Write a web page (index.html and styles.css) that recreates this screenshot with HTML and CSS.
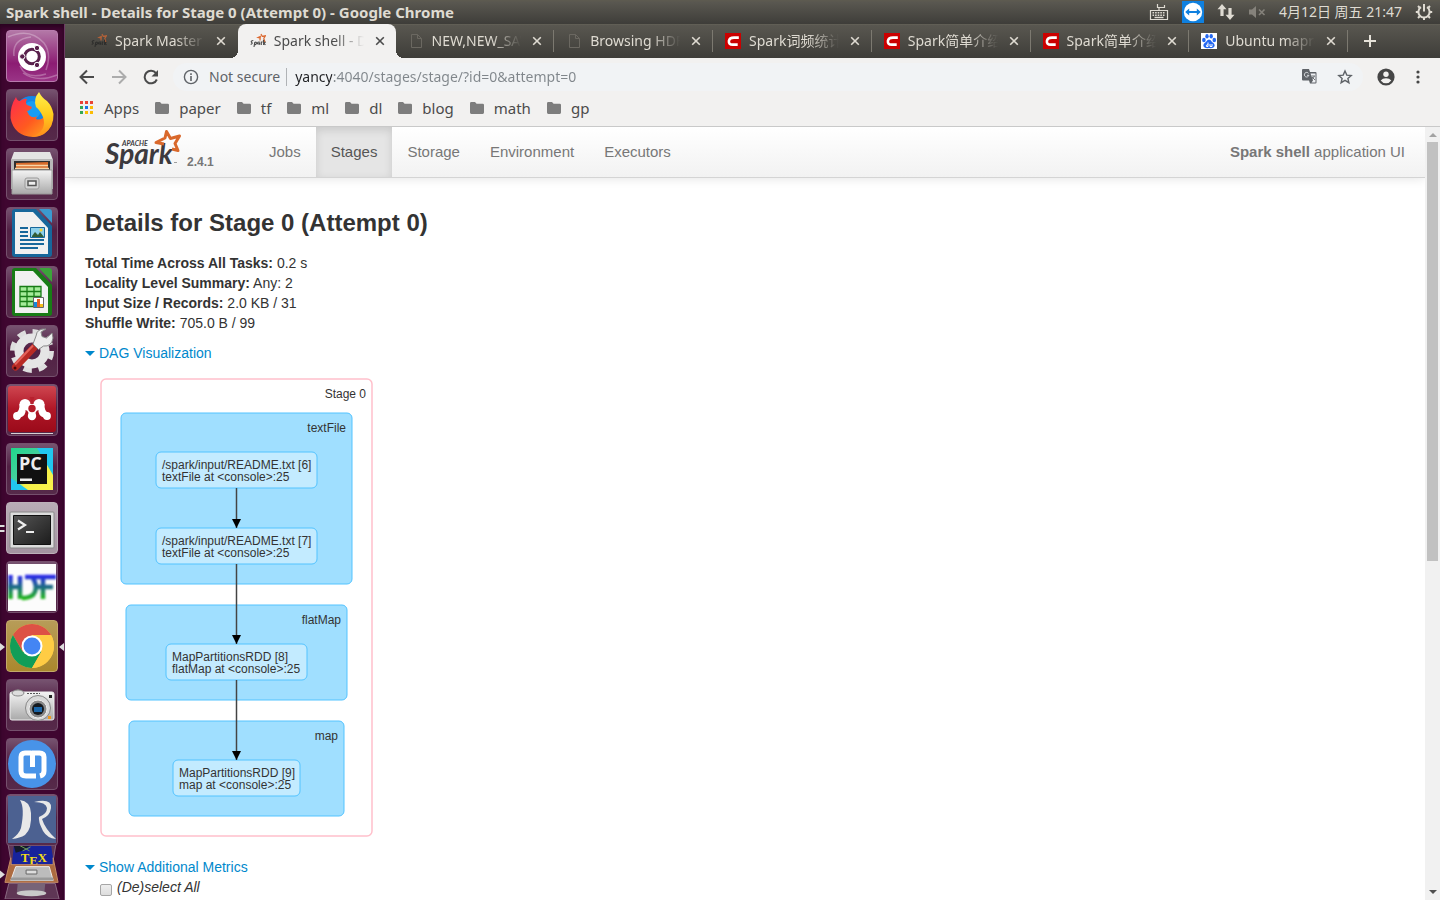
FILE: index.html
```html
<!DOCTYPE html>
<html lang="en">
<head>
<meta charset="utf-8">
<title>Spark shell - Details for Stage 0 (Attempt 0)</title>
<link rel="stylesheet" href="styles.css">
</head>
<body>
<svg class="defs" aria-hidden="true">
  <defs>
    <linearGradient id="silver" x1="0" y1="0" x2="0" y2="1"><stop offset="0" stop-color="#f4f4f4"/><stop offset="1" stop-color="#a9a9a9"/></linearGradient>
    <linearGradient id="redg" x1="0" y1="0" x2="0" y2="1"><stop offset="0" stop-color="#cf4650"/><stop offset=".5" stop-color="#b01727"/><stop offset="1" stop-color="#9b0a1a"/></linearGradient>
    <linearGradient id="hdf" gradientUnits="userSpaceOnUse" x1="0" y1="14" x2="0" y2="39"><stop offset="0" stop-color="#2a22f0"/><stop offset=".5" stop-color="#1c6f80"/><stop offset="1" stop-color="#22c010"/></linearGradient>
    <linearGradient id="foxr" x1="0" y1="0" x2="1" y2="1"><stop offset="0" stop-color="#ff2a4e"/><stop offset=".55" stop-color="#ff5a20"/><stop offset="1" stop-color="#ffb01c"/></linearGradient>
    <linearGradient id="foxy" x1="0" y1="0" x2="0" y2="1"><stop offset="0" stop-color="#fff04c"/><stop offset=".5" stop-color="#ffcd1c"/><stop offset="1" stop-color="#ff8a1c"/></linearGradient>
    <linearGradient id="term" x1="0" y1="0" x2="1" y2="1"><stop offset="0" stop-color="#555"/><stop offset="1" stop-color="#1c1c1c"/></linearGradient>
    <linearGradient id="pyc" x1="0" y1="0" x2="1" y2="1"><stop offset="0" stop-color="#1fd68a"/><stop offset=".45" stop-color="#48d0a0"/><stop offset=".6" stop-color="#f4f04a"/><stop offset="1" stop-color="#f8f24c"/></linearGradient>
    <symbol id="folder" viewBox="0 0 14 12"><path fill="#7d7d7d" d="M1.3 0H5l1.6 1.7h6.1q1.3 0 1.3 1.3v7.6q0 1.4-1.3 1.4H1.3Q0 12 0 10.600V1.400Q0 0 1.300 0z"/></symbol>
    <symbol id="page" viewBox="0 0 16 16"><path fill="none" stroke="#6b6861" d="M3.500 1.500h6l4 4v9h-10zM9.500 1.500v4h4"/></symbol>
    <symbol id="csdn" viewBox="0 0 16 16"><path fill="#cb0000" d="M0 0h16v16H0z"/><path fill="none" stroke="#fff" stroke-width="2.600" d="M13.800 4.600H9Q4.500 4.600 3.900 8q-.4 3.600 3.800 3.600h5"/></symbol>
    <symbol id="spk" viewBox="0 0 16 16"><path fill="none" stroke="#dc6a32" stroke-width="1.200" d="M11 1l1.200 2.300 3.300-.6-1.700 2.600 1 3.300-2-.8M10 7.500V5L8 4.500l2.300-1z"/><path fill="none" stroke="currentColor" stroke-width="1.100" d="M3.300 7.500q-2.800.2-1.800 1.700 1.800 1.200-.8 2.300M4 14l.7-4.500q2-1 1.700.8-.6 1.900-1.800 1M9.700 9q-2.200-.4-2.200 1.600 1 1.200 2.200-.8l-.1 2M11.300 12V9h1.300M13.600 12V6.700M15.700 8.800l-1.700 1.400 1.400 1.800"/></symbol>
    <symbol id="x" viewBox="0 0 10 10"><path fill="none" stroke="currentColor" stroke-width="1.600" d="M1.200 1.200l7.600 7.600M8.800 1.200L1.200 8.800"/></symbol>
  </defs>
</svg>

<header class="panel">
  <h1 class="panel-title">Spark shell - Details for Stage 0 (Attempt 0) - Google Chrome</h1>
  <div class="indicators">
    <svg width="20" height="20" viewBox="0 0 20 20"><path fill="none" stroke="#dfdbd2" stroke-width="1.200" d="M1.500 8.500h17v9h-17zM10 8V5.500h5.500V3M10 5.500H8.500V2"/><path stroke="#dfdbd2" stroke-width="1.600" stroke-dasharray="1.600 1" d="M3.500 10.800h13M3.500 13.200h13"/><path stroke="#dfdbd2" stroke-width="1.400" d="M5.500 15.500h9"/></svg>
    <svg width="22" height="22" viewBox="0 0 22 22"><path fill="#0f80df" d="M0 0h22v22H0z"/><circle cx="11" cy="11" r="9.200" fill="#fff"/><path fill="#0f80df" d="M3.200 11l4-3.400v2.400h7.600V7.600l4 3.400-4 3.400V12H7.200v2.400z"/></svg>
    <svg width="18" height="18" viewBox="0 0 18 18"><path fill="#dfdbd2" d="M5 1l4.500 5.200H6.600V13H3.400V6.200H.5zM13 17l-4.500-5.200h2.900V5h3.200v6.800h2.900z"/></svg>
    <svg width="18" height="16" viewBox="0 0 18 16"><path fill="#85827b" d="M1 5.500h3L8 2v12l-4-3.500H1z"/><path stroke="#85827b" stroke-width="1.600" d="M11 5.500l5.500 5.500M16.500 5.500L11 11"/></svg>
    <time class="clock">4月12日 周五 21:47</time>
    <svg width="18" height="18" viewBox="0 0 18 18"><path fill="none" stroke="#dfdbd2" stroke-width="2" d="M6 4.200a5.600 5.600 0 1 0 6 0M9 1v7.500"/><path fill="none" stroke="#dfdbd2" stroke-width="2" d="M3 3l1.700 1.700M15 3l-1.700 1.700M.8 9h2.500M14.700 9h2.500M3 15l1.700-1.700M15 15l-1.700-1.700M9 14.500V17"/></svg>
  </div>
</header>

<div class="desktop">
  <nav class="launcher" aria-label="Launcher">
    <button class="tile dash" aria-label="Dash"><svg viewBox="0 0 52 52"><g fill="none" stroke="#fff" stroke-opacity=".28" stroke-width="1.500"><path d="M2 7q22-10 36 6 8 11 2 27M8 26q-2-17 17-19M51 45q-20 8-34-2M14 36q6 14 26 8"/></g><circle cx="26" cy="27" r="14" fill="#fff"/><circle cx="26" cy="26.500" r="7.300" fill="none" stroke="#59204c" stroke-width="3"/><g fill="#59204c" stroke="#fff" stroke-width="1"><circle cx="16.300" cy="26.500" r="2.700"/><circle cx="31" cy="18" r="2.700"/><circle cx="31" cy="35" r="2.700"/></g></svg></button>
    <button class="tile" aria-label="Firefox"><svg viewBox="0 0 52 52"><circle cx="26" cy="25" r="18" fill="#1287e8"/><circle cx="26" cy="21" r="9" fill="#20b3ff" opacity=".5"/><path fill="url(#foxr)" d="M10 8q1 4 4 4 4-3 7-2-2 4 0 6 3 1 5 2-1 3-5 4l2 4q4 4 8 1l-1 3q5 2 10-4l6 8q-5 13-19 14Q8 47 4.500 29 4 17 10 8z"/><path fill="url(#foxy)" d="M33 3q3 6 8 9 5 5 6.500 13Q48 38 38 45q-5 3-12 3 8-3 11-9 2-5 0-11-3-7-7-10-3-8 3-15z"/></svg></button>
    <button class="tile" aria-label="Files"><svg viewBox="0 0 52 52"><path fill="#e4e4e4" d="M8 4h36l3 8H5z"/><path fill="#b9b9b9" d="M5 11h42v30H5z"/><path fill="#303030" d="M8 13h36v10H8z"/><path fill="#d96c2b" d="M10 15l32-1v7H10z"/><path stroke="#f7d5a8" stroke-width="1.500" d="M10 17.500h32M9 20.500h34"/><path fill="url(#silver)" stroke="#999" d="M6 22h40v24H6z"/><rect x="19" y="30" width="14" height="11" rx="2" fill="#d4d4d4" stroke="#999"/><path fill="#eee" stroke="#555" stroke-width="1.500" d="M22 33h8v4.500h-8z"/></svg></button>
    <button class="tile" aria-label="Writer"><svg viewBox="0 0 52 52"><path fill="#17679b" d="M9 2h21l16 17v28q0 3-3 3H9q-3 0-3-3V5q0-3 3-3z"/><path fill="#3b9bd0" d="M33 2h10q3 0 3 3v11z"/><path fill="#f1f1f1" d="M9 5h18l15 16v26H9z"/><path stroke="#17679b" stroke-width="2" d="M14 21h8M14 25h8M14 29h8M14 33h24M14 37h24M14 41h18"/><path fill="#8dd0ea" stroke="#17679b" d="M24.500 20.500h14v10h-14z"/><path fill="#315d35" d="M26 29l3-4 3 3 2-3 4 5H26z"/><circle cx="35" cy="23" r="1.500" fill="#f6d032"/></svg></button>
    <button class="tile" aria-label="Calc"><svg viewBox="0 0 52 52"><path fill="#187c16" d="M9 2h21l16 17v28q0 3-3 3H9q-3 0-3-3V5q0-3 3-3z"/><path fill="#3ca43a" d="M33 2h10q3 0 3 3v11z"/><path fill="#f1f1f1" d="M9 5h18l15 16v26H9z"/><path fill="#a5ec9a" stroke="#187c16" stroke-width="1.300" d="M14 20.500h21v20H14zM21 20v20M28 20v20M14 25.500h21M14 30.500h21M14 35.500h21"/><path fill="#fff" stroke="#666" d="M27.500 31.500h10v10h-10z"/><path fill="#1688dc" d="M28 36h3v5h-3z"/><path fill="#e65e24" d="M31 33h3v8h-3z"/><path fill="#f4bd19" d="M34 38h3v3h-3z"/></svg></button>
    <button class="tile" aria-label="System Settings"><svg viewBox="0 0 52 52"><circle cx="26" cy="26" r="18.500" fill="none" stroke="#dedede" stroke-width="7" stroke-dasharray="8 6.530"/><circle cx="26" cy="26" r="13" fill="none" stroke="#e5e5e5" stroke-width="9"/><path fill="none" stroke="#b82a24" stroke-width="7" stroke-linecap="round" d="M9.500 42l20-21"/><path stroke="#e4625a" stroke-width="2" d="M9 39.500l18-19"/><path fill="#ececec" stroke="#888" d="M27 19l5.500 5.500 5-3.500q8 1 9.500-8l-1-5-5.500 5-4.500-1.500-1-4.500 5-3q-9-1-10 7z"/><circle cx="9" cy="43" r="1.500" fill="#450808"/></svg></button>
    <button class="tile" aria-label="Mendeley"><svg viewBox="0 0 52 52"><rect x="2" y="2" width="48" height="46" rx="3" fill="url(#redg)"/><path stroke="#d9d0d3" d="M5 49.500h42"/><g fill="#fff"><circle cx="11" cy="32" r="3.900"/><circle cx="26" cy="32" r="4.200"/><circle cx="41" cy="32" r="3.900"/><circle cx="19" cy="20.500" r="5.500"/><circle cx="33" cy="20.500" r="5.500"/><path d="M13.500 20q.5 7-4 9l4 5q7-3 6-8 4 1 3 7h7q-1-6 3-7-1 5 6 8l4-5q-4.500-2-4-9z"/></g><circle cx="26" cy="24.500" r="3.700" fill="#b51c2a"/><path fill="#b8202e" d="M23.500 13h5L26 19z"/></svg></button>
    <button class="tile" aria-label="PyCharm"><svg viewBox="0 0 52 52"><path fill="url(#pyc)" d="M5 5h42v42H5z"/><path fill="#21c7ee" d="M31 5h16v27zM5 35v12h17z"/><path fill="#111" d="M11 11h30v30H11z"/><text x="13" y="27" class="pc">PC</text><path fill="#eee" d="M14 35.500h12V38H14z"/></svg></button>
    <button class="tile lit" aria-label="Terminal"><svg viewBox="0 0 52 52"><rect x="4" y="10" width="44" height="36" rx="1" fill="#dcdcdc" stroke="#888"/><path fill="url(#term)" stroke="#111" d="M7.500 13.500h37v29h-37z"/><path fill="none" stroke="#eee" stroke-width="2.200" d="M12 18.500l7 4.500-7 4.500M20 30h8"/></svg><svg class="pip two" viewBox="0 0 5 8"><path fill="#ddd" d="M0 0h4l1 1-1 1H0zM0 5h4l1 1-1 1H0z"/></svg></button>
    <button class="tile" aria-label="HDF"><svg viewBox="0 0 52 52"><path fill="#fcfcfc" d="M2 3h48v47H2z"/><path class="soft" fill="none" stroke="url(#hdf)" stroke-width="4.500" d="M4.500 14v24M2 26h12M14 15v23M19 16h31M27 17q6 10 0 17-4 3-11 3M37 15v23M28 26h19"/></svg></button>
    <button class="tile gold" aria-label="Chrome"><svg viewBox="0 0 52 52"><circle cx="26" cy="26" r="22" fill="#fc4"/><path fill="#dd5145" d="M6.950 15A22 22 0 0 1 45.050 15L26 15 16.500 31.500z"/><path fill="#119d58" d="M6.950 15A22 22 0 0 0 26 48L35.500 31.500 16.500 31.500z"/><path fill="#fc4" d="M45.050 15A22 22 0 0 1 26 48L35.500 31.500 26 15z"/><circle cx="26" cy="26" r="10.500" fill="#fff"/><circle cx="26" cy="26" r="8.500" fill="#4385f4"/></svg><svg class="pip" viewBox="0 0 5 8"><path fill="#ddd" d="M0 0l5 4-5 4z"/></svg><svg class="pip right" viewBox="0 0 5 8"><path fill="#ddd" d="M5 0L0 4l5 4z"/></svg></button>
    <button class="tile" aria-label="Camera"><svg viewBox="0 0 52 52"><path fill="#999" d="M7 13q5-5 10 0z"/><rect x="4" y="13" width="44" height="28" rx="2" fill="url(#silver)" stroke="#eee"/><ellipse cx="12" cy="14" rx="6" ry="3" fill="#ddd" stroke="#888"/><path stroke="#555" stroke-dasharray="2 1" d="M21 14.500h13"/><circle cx="32" cy="29" r="12.500" fill="#d8d8d8" stroke="#888"/><circle cx="32" cy="30" r="9" fill="#888" stroke="#eee"/><circle cx="32" cy="30" r="6" fill="#14191f"/><path fill="#1b65a7" d="M28 28h8v5h-8z"/><path fill="#222" d="M43 16h3v3h-3z"/><path fill="#ef991f" d="M42 37h3v3h-3z"/></svg></button>
    <button class="tile" aria-label="Mathpix"><svg viewBox="0 0 52 52"><circle cx="26" cy="26" r="24" fill="#4893e8"/><path fill="none" stroke="#fff" stroke-width="5" d="M26.500 29V17q0-2-2-2H19q-4 0-4 4v14q0 5 5 5h10M26 15h7.500q4.500 0 4.500 4v14q0 4-4 5"/></svg></button>
    <button class="tile jabref" aria-label="JabRef"><svg viewBox="0 0 52 52"><path fill="#4c6191" d="M2 2h48v47H2z"/><g fill="#e8e8e8"><path d="M14 6q10 1 11 13 1 16-6 22-5 3-13 4 7-5 9-11 4-20-1-28zM28 8q18-4 17 6-1 8-9 11 3 10 14 20-9-1-13-8-5-10-4-14 8-3 8-9-1-6-13-6z"/></g></svg></button>
    <div class="stack">
      <svg viewBox="0 0 65 57"><path fill="#5f3655" stroke="#8a6b82" d="M8 0h49l-4 24H12z"/><path fill="#17239c" d="M14 3h38l3 20H12z"/><path fill="#151b29" d="M14 3h16l-8 5-6 2z"/><path stroke="#6f9b56" d="M19 2l11 6M23 8l8-4"/><text x="21" y="19" class="tex">T<tspan dy="3">E</tspan><tspan dy="-3">X</tspan></text><path fill="#ad6b40" stroke="#c58b66" d="M11 15L5 40h54l-5-25v7H11z"/><path fill="#bcbcbc" stroke="#eee" d="M16 24h34l4 14H11z"/><path fill="#999" d="M11 35h43v3H11z"/><path fill="#ddd" stroke="#666" d="M26.500 27.500h11v4h-11z"/><path fill="#5f3655" stroke="#8a6b82" d="M9 41h47l4 16H5z"/><path fill="#776478" d="M18 41h28l-1 10H17z"/><ellipse cx="32" cy="51" rx="15" ry="3" fill="#c9c9c9"/><path fill="#ddd" d="M0 28l5 4-5 4z"/></svg>
    </div>
  </nav>

  <section class="browser">
    <div class="tabs">
      <div class="strip">
        <div class="tab"><svg class="fav dark"><use href="#spk"/></svg><button class="tab-name">Spark Master at</button><button class="close" aria-label="Close"><svg><use href="#x"/></svg></button></div>
        <div class="tab active"><svg class="fav"><use href="#spk"/></svg><button class="tab-name">Spark shell - Details</button><button class="close" aria-label="Close"><svg><use href="#x"/></svg></button></div>
        <div class="tab"><svg class="fav"><use href="#page"/></svg><button class="tab-name">NEW,NEW_SAVING</button><button class="close" aria-label="Close"><svg><use href="#x"/></svg></button></div>
        <div class="tab"><svg class="fav"><use href="#page"/></svg><button class="tab-name">Browsing HDFS</button><button class="close" aria-label="Close"><svg><use href="#x"/></svg></button></div>
        <div class="tab"><svg class="fav"><use href="#csdn"/></svg><button class="tab-name">Spark词频统计</button><button class="close" aria-label="Close"><svg><use href="#x"/></svg></button></div>
        <div class="tab"><svg class="fav"><use href="#csdn"/></svg><button class="tab-name">Spark简单介绍</button><button class="close" aria-label="Close"><svg><use href="#x"/></svg></button></div>
        <div class="tab"><svg class="fav"><use href="#csdn"/></svg><button class="tab-name">Spark简单介绍</button><button class="close" aria-label="Close"><svg><use href="#x"/></svg></button></div>
        <div class="tab"><svg class="fav" viewBox="0 0 16 16"><path fill="#fff" d="M0 0h16v16H0z"/><g fill="#2468f2"><ellipse cx="2.900" cy="7" rx="1.800" ry="2.300"/><ellipse cx="6" cy="3.300" rx="1.700" ry="2.300"/><ellipse cx="10.200" cy="3.300" rx="1.700" ry="2.300"/><ellipse cx="13.300" cy="7" rx="1.800" ry="2.300"/><path d="M8 6.500q2 0 3 2.500 3.500 2 2.400 4.600-1 2-5.400 1.400-4.400.6-5.400-1.400Q1.500 11 5 9q1-2.500 3-2.500z"/></g><path fill="none" stroke="#fff" d="M7 9.500v4H5.500q-1-1.500 1.500-2M9 11v2.500h2V11"/></svg><button class="tab-name">Ubuntu mapreduce</button><button class="close" aria-label="Close"><svg><use href="#x"/></svg></button></div>
      </div>
      <button class="new-tab" aria-label="New tab"><svg width="12" height="12" viewBox="0 0 12 12"><path stroke="#e6e2d9" stroke-width="2" d="M6 0v12M0 6h12"/></svg></button>
    </div>

    <div class="toolbar">
      <div class="nav-buttons">
        <button aria-label="Back"><svg width="16" height="16" viewBox="0 0 16 16"><path fill="none" stroke="#4a4a4a" stroke-width="2" d="M15 8H2M8 1.500L1.500 8 8 14.500"/></svg></button>
        <button aria-label="Forward"><svg width="16" height="16" viewBox="0 0 16 16"><path fill="none" stroke="#acacac" stroke-width="2" d="M1 8h13M8 1.500L14.500 8 8 14.500"/></svg></button>
        <button aria-label="Reload"><svg width="16" height="16" viewBox="0 0 16 16"><path fill="none" stroke="#4a4a4a" stroke-width="2" d="M13.800 10.500A6.300 6.300 0 1 1 13 4.200"/><path fill="#4a4a4a" d="M15 1v6.500H8.500z"/></svg></button>
      </div>
      <div class="omnibox">
        <svg width="16" height="16" viewBox="0 0 16 16"><circle cx="8" cy="8" r="6.600" fill="none" stroke="#5f6368" stroke-width="1.400"/><path stroke="#5f6368" stroke-width="1.600" d="M8 4.200v1.700M8 7v5"/></svg>
        <label class="secure" for="url">Not secure</label>
        <input id="url" type="text" value="yancy:4040/stages/stage/?id=0&amp;attempt=0">
        <button aria-label="Translate"><svg width="15" height="15" viewBox="0 0 15 15"><path fill="#5f6368" d="M1 0h6l1 3h5.500q1 0 1 1v9.500q0 1-1 1H8l-1-3H1q-1 0-1-1V1q0-1 1-1z"/><path fill="#eef0f3" d="M8.500 4.500h5v9H9.500L11 11.500z"/><path fill="none" stroke="#dcdfe2" d="M6.500 4.300a2.300 2.300 0 1 0 .4 2H5"/><path fill="none" stroke="#5f6368" stroke-width=".9" d="M9.500 7h3.500M12.300 7q-.5 2-2.300 3.500M10 8l3 3"/></svg></button>
        <button aria-label="Bookmark"><svg width="16" height="16" viewBox="0 0 16 16"><path fill="none" stroke="#5f6368" stroke-width="1.400" d="M8 2l1.800 4.100 4.400.4-3.300 2.900 1 4.300L8 11.400l-3.900 2.300 1-4.300-3.300-2.900 4.400-.4z"/></svg></button>
      </div>
      <button aria-label="Profile"><svg width="18" height="18" viewBox="0 0 18 18"><circle cx="9" cy="9" r="8.600" fill="#464646"/><circle cx="9" cy="6.300" r="2.700" fill="#f2f1f0"/><path fill="#f2f1f0" d="M3.700 12.500Q5.500 10.200 9 10.200t5.300 2.300Q12.500 15.200 9 15.200t-5.300-2.700z"/></svg></button>
      <button class="menu" aria-label="Menu"><svg width="4" height="14" viewBox="0 0 4 14"><g fill="#464646"><circle cx="2" cy="2" r="1.600"/><circle cx="2" cy="7" r="1.600"/><circle cx="2" cy="12" r="1.600"/></g></svg></button>
    </div>

    <nav class="bookmarks" aria-label="Bookmarks">
      <a href="#"><svg width="14" height="14" viewBox="0 0 14 14"><path fill="#ea4335" d="M0 0h3v3H0zM5 0h3v3H5zM10 0h3v3h-3z"/><path fill="#34a853" d="M0 5h3v3H0zM0 10h3v3H0z"/><path fill="#1a73e8" d="M5 5h3v3H5z"/><path fill="#fbbc04" d="M10 5h3v3h-3zM5 10h3v3H5zM10 10h3v3h-3z"/></svg>Apps</a>
      <a href="#"><svg class="folder"><use href="#folder"/></svg>paper</a>
      <a href="#"><svg class="folder"><use href="#folder"/></svg>tf</a>
      <a href="#"><svg class="folder"><use href="#folder"/></svg>ml</a>
      <a href="#"><svg class="folder"><use href="#folder"/></svg>dl</a>
      <a href="#"><svg class="folder"><use href="#folder"/></svg>blog</a>
      <a href="#"><svg class="folder"><use href="#folder"/></svg>math</a>
      <a href="#"><svg class="folder"><use href="#folder"/></svg>gp</a>
    </nav>

    <div class="viewport">
      <main class="page">
        <div class="navbar">
          <a class="brand" href="#">
            <svg width="78" height="40" viewBox="0 0 78 40" aria-label="Apache Spark"><text x="17" y="17" class="apache">APACHE</text><text x="0" y="35" class="word">Spark</text><path fill="none" stroke="#d9682b" stroke-width="3" stroke-linejoin="round" d="M59 15l-8-1.500 9-4.500 1.500-6.500 4 7 9-2.500-4.500 7.500 3 7-6-1.500"/><path stroke="#888" stroke-width=".8" d="M69 33.500h3"/></svg>
            <span class="version">2.4.1</span>
          </a>
          <nav class="links"><a href="#">Jobs</a><a href="#" class="current">Stages</a><a href="#">Storage</a><a href="#">Environment</a><a href="#">Executors</a></nav>
          <p class="app-name"><strong>Spark shell</strong> application UI</p>
        </div>
        <div class="content">
          <h3>Details for Stage 0 (Attempt 0)</h3>
          <ul class="summary">
            <li><strong>Total Time Across All Tasks:</strong> 0.2 s</li>
            <li><strong>Locality Level Summary:</strong> Any: 2</li>
            <li><strong>Input Size / Records:</strong> 2.0 KB / 31</li>
            <li><strong>Shuffle Write:</strong> 705.0 B / 99</li>
          </ul>
          <a href="#" class="expand">DAG Visualization</a>
          <svg class="dag" width="304" height="494" viewBox="0 0 304 494">
            <defs><marker id="arrow" viewBox="0 0 10 10" refX="10" refY="5" markerWidth="9" markerHeight="9" markerUnits="userSpaceOnUse" orient="auto"><path d="M0 0l10 5-10 5z"/></marker></defs>
            <rect class="stage" x="16" y="16" width="271" height="457" rx="5"/><text class="end" x="281" y="35">Stage 0</text>
            <rect class="cluster" x="36" y="50" width="231" height="171" rx="5"/><text class="end" x="261" y="69">textFile</text>
            <rect class="cluster" x="41" y="242" width="221" height="95" rx="5"/><text class="end" x="256" y="261">flatMap</text>
            <rect class="cluster" x="44" y="358" width="215" height="95" rx="5"/><text class="end" x="253" y="377">map</text>
            <rect class="node" x="71" y="89" width="161" height="36" rx="5"/><text x="77" y="106">/spark/input/README.txt [6]</text><text x="77" y="118">textFile at &lt;console&gt;:25</text>
            <rect class="node" x="71" y="165" width="161" height="36" rx="5"/><text x="77" y="182">/spark/input/README.txt [7]</text><text x="77" y="194">textFile at &lt;console&gt;:25</text>
            <rect class="node" x="81" y="281" width="141" height="36" rx="5"/><text x="87" y="298">MapPartitionsRDD [8]</text><text x="87" y="310">flatMap at &lt;console&gt;:25</text>
            <rect class="node" x="88" y="397" width="127" height="36" rx="5"/><text x="94" y="414">MapPartitionsRDD [9]</text><text x="94" y="426">map at &lt;console&gt;:25</text>
            <path class="edge" d="M151.500 125v40"/><path class="edge" d="M151.500 201v80"/><path class="edge" d="M151.500 317v80"/>
          </svg>
          <a href="#" class="expand">Show Additional Metrics</a>
          <div class="option"><input type="checkbox" id="all"><label for="all">(De)select All</label></div>
        </div>
      </main>
      <div class="scrollbar"><i class="up"></i><div class="thumb"></div><i class="down"></i></div>
    </div>
  </section>
</div>
</body>
</html>
```
FILE: styles.css
```css
* { box-sizing: border-box; }
body {
  margin: 0;
  height: 100vh;
  overflow: hidden;
  display: flex;
  flex-direction: column;
  font: 14px/20px "Liberation Sans", "Noto Sans CJK SC", sans-serif;
  color: #333;
  background: #fff;
}
button { border: 0; padding: 0; background: none; font: inherit; color: inherit; }
a { color: inherit; text-decoration: none; }
svg { display: block; flex: none; }
.defs { position: absolute; width: 0; height: 0; }

/* Desktop panel */
.panel {
  flex: none;
  height: 24px;
  display: flex;
  align-items: center;
  justify-content: space-between;
  padding: 0 7px 0 6px;
  background: linear-gradient(#5e5b50, #595750 10%, #3e3d39);
  color: #dfdbd2;
  font-family: "Noto Sans", "Noto Sans CJK SC", sans-serif;
}
.panel-title { margin: 0; font-size: 15px; line-height: 24px; }
.indicators { display: flex; align-items: center; gap: 13px; }
.clock { font-size: 14px; }
.desktop { flex: 1; min-height: 0; display: flex; }

/* Launcher */
.launcher {
  flex: none;
  width: 65px;
  overflow: hidden;
  display: flex;
  flex-direction: column;
  align-items: center;
  gap: 7px;
  padding-top: 6px;
  background: #3f0630;
  border-right: 1px solid #6d3a64;
  box-shadow: inset 0 3px 4px #2a0320;
}
.tile {
  position: relative;
  flex: none;
  width: 52px;
  height: 52px;
  border: 1px solid #75506d;
  border-radius: 4px;
  background: linear-gradient(#765370, #522044 45%, #562a4a);
}
.tile > svg:first-child { width: 52px; height: 52px; margin: -1px; }
.dash { background: linear-gradient(#b378a7, #8c1c73 65%, #9a3486); border-color: #b87bad; }
.lit { background: linear-gradient(#b9acb6, #a393a0); border-color: #bcb0b9; }
.gold { background: linear-gradient(#b79c58, #aa882d); border-color: #c3a96a; }
.jabref { margin-top: -3px; }
.pip { position: absolute; left: -7px; top: 22px; width: 5px; height: 8px; }
.pip.right { left: 52px; }
.soft { filter: blur(1px); }
.stack { flex: none; width: 64px; margin-top: -10px; }
.pc { font: bold 18px "Open Sans", sans-serif; fill: #eee; }
.tex { font: bold 13px "Liberation Serif", serif; fill: #f2de17; }

/* Browser chrome */
.browser {
  flex: 1;
  min-width: 0;
  display: flex;
  flex-direction: column;
  background: #f2f1f0;
  font-family: "Noto Sans", "Noto Sans CJK SC", sans-serif;
}
.tabs {
  flex: none;
  height: 34px;
  display: flex;
  padding-left: 14px;
  background: linear-gradient(#68655a, #595750 3%, #3e3d39);
  color: #dfdbd2;
}
.strip { flex: 0 1 1269px; min-width: 0; display: flex; }
.tab {
  position: relative;
  flex: 1;
  min-width: 0;
  display: flex;
  align-items: center;
  gap: 8px;
  padding: 0 10px 0 12px;
}
.tab:not(.active) { border-right: 1px solid transparent; border-image: linear-gradient(transparent 20%, #7c7970 20%, #7c7970 80%, transparent 80%) 1; }
.tab:first-child { border-image: none; }
.tab.active { background: #f2f1f0; color: #4b4b4b; border-radius: 8px 8px 0 0; }
.tab.active::before, .tab.active::after {
  content: "";
  position: absolute;
  bottom: 0;
  width: 8px;
  height: 8px;
}
.tab.active::before { left: -8px; background: radial-gradient(circle at 0 0, transparent 8px, #f2f1f0 8px); }
.tab.active::after { right: -8px; background: radial-gradient(circle at 100% 0, transparent 8px, #f2f1f0 8px); }
.fav { width: 16px; height: 16px; }
.dark { opacity: .7; color: #222; }
.tab-name {
  flex: 1;
  min-width: 0;
  overflow: hidden;
  white-space: nowrap;
  text-align: left;
  line-height: 22px;
  mask-image: linear-gradient(to right, #000 65%, transparent 98%);
}
.close { flex: none; padding: 1px; }
.close svg { width: 10px; height: 10px; }
.new-tab { padding: 0 16px; }
.toolbar {
  flex: none;
  height: 37px;
  display: flex;
  align-items: center;
  gap: 14px;
  padding: 0 20px 0 14px;
}
.nav-buttons { display: flex; gap: 16px; }
.omnibox {
  flex: 1;
  min-width: 0;
  height: 28px;
  display: flex;
  align-items: center;
  padding: 0 10px;
  border-radius: 14px;
  background: #f1f3f5;
}
.omnibox > button { margin-left: 20px; }
.secure { margin-left: 10px; padding-right: 6px; border-right: 1px solid #b0b3b6; line-height: 18px; color: #5f6368; white-space: nowrap; }
#url {
  flex: 1;
  min-width: 0;
  border: 0;
  padding: 0 0 0 8px;
  font: 14px/20px "Noto Sans", sans-serif;
  color: transparent;
  background: linear-gradient(to right, #202124 45px, #80868b 45px);
  background-clip: text;
  -webkit-background-clip: text;
}
.menu { margin-left: 7px; }
.bookmarks {
  flex: none;
  height: 32px;
  display: flex;
  align-items: center;
  gap: 16px;
  padding: 0 15px 5px;
  border-bottom: 1px solid #c9c9c9;
  color: #4b4b4b;
  font-size: 15px;
}
.bookmarks a { display: flex; align-items: center; gap: 10px; }
.folder { width: 14px; height: 12px; }

/* Page viewport */
.viewport { flex: 1; min-height: 0; display: flex; background: #fff; font-family: "Liberation Sans", sans-serif; }
.page { flex: 1; min-width: 0; overflow: hidden; }
.navbar {
  height: 51px;
  display: flex;
  padding: 0 20px 0 40px;
  background: linear-gradient(#fff, #f2f2f2);
  border-bottom: 1px solid #d4d4d4;
  box-shadow: 0 1px 10px rgba(0, 0, 0, .1);
  font-size: 15px;
  line-height: 50px;
  color: #777;
}
.brand { display: flex; gap: 4px; width: 149px; padding-top: 2px; }
.version { font-size: 12px; font-weight: bold; line-height: 66px; }
.apache { font: italic bold 7px "Lato", sans-serif; fill: #3c3a3e; }
.word { font: italic bold 28px "Lato", sans-serif; fill: #3c3a3e; }
.links { display: flex; flex: 1; }
.links a { padding: 0 15px; }
.links .current { color: #555; background: #e5e5e5; box-shadow: inset 0 3px 8px rgba(0, 0, 0, .125); }
.app-name { margin: 0; }
.content { padding: 25px 20px 0; }
h3 { margin: 0 0 10px; font-size: 24px; line-height: 40px; }
.summary { list-style: none; margin: 0 0 10px; padding: 0; }
.expand { display: flex; align-items: center; gap: 4px; color: #08c; }
.expand::before { content: ""; border: 5px solid transparent; border-top-color: #08c; border-bottom: 0; }
.dag text { font: 12px "Liberation Sans", sans-serif; fill: #333; }
.dag .end { text-anchor: end; }
.stage { fill: #fff; stroke: #ffc0cb; stroke-width: 1.500; }
.cluster { fill: #a0dfff; stroke: #52c3ff; }
.node { fill: #c3ebff; stroke: #52c3ff; }
.edge { stroke: #444; stroke-width: 1.500; marker-end: url(#arrow); }
.option { display: flex; align-items: center; gap: 5px; padding-left: 15px; font-style: italic; }
.option input {
  appearance: none;
  width: 12px;
  height: 12px;
  margin: 6px 0 0;
  border: 1px solid #a6a6a6;
  border-radius: 2px;
  background: linear-gradient(#eee, #ddd);
}
.scrollbar { flex: none; width: 15px; display: flex; flex-direction: column; align-items: center; padding: 6px 0; background: #f1f1f1; }
.thumb { width: 11px; height: 55%; margin-top: 5px; margin-bottom: auto; background: #c1c1c1; }
.up, .down { border: 4px solid transparent; }
.up { border-top: 0; border-bottom-color: #a3a3a3; }
.down { border-bottom: 0; border-top-color: #505050; }
```
